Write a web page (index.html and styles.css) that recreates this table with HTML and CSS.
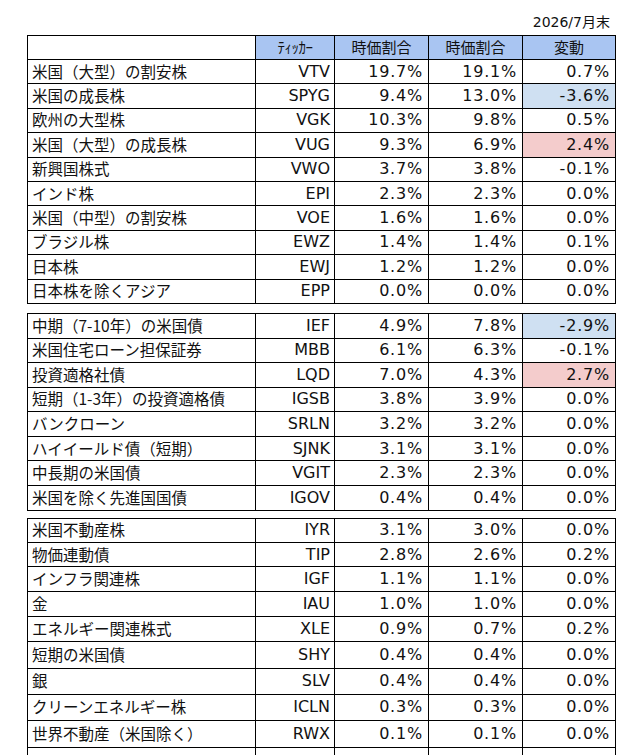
FILE: index.html
```html
<!DOCTYPE html>
<html lang="ja">
<head>
<meta charset="utf-8">
<title>2026/7月末</title>
<link rel="stylesheet" href="styles.css">
</head>
<body>
<div class="sheet">
  <div class="date">2026/7月末</div>

  <div class="block sec1">
    <div class="row head">
      <div class="cell blank"></div>
      <div class="cell hc tick-h">ﾃｨｯｶｰ</div>
      <div class="cell hc">時価割合</div>
      <div class="cell hc">時価割合</div>
      <div class="cell hc">変動</div>
    </div>
    <div class="row"><div class="cell name">米国（大型）の割安株</div><div class="cell tick">VTV</div><div class="cell num">19.7%</div><div class="cell num">19.1%</div><div class="cell num">0.7%</div></div>
    <div class="row"><div class="cell name">米国の成長株</div><div class="cell tick">SPYG</div><div class="cell num">9.4%</div><div class="cell num">13.0%</div><div class="cell num down">-3.6%</div></div>
    <div class="row"><div class="cell name">欧州の大型株</div><div class="cell tick">VGK</div><div class="cell num">10.3%</div><div class="cell num">9.8%</div><div class="cell num">0.5%</div></div>
    <div class="row"><div class="cell name">米国（大型）の成長株</div><div class="cell tick">VUG</div><div class="cell num">9.3%</div><div class="cell num">6.9%</div><div class="cell num up">2.4%</div></div>
    <div class="row"><div class="cell name">新興国株式</div><div class="cell tick">VWO</div><div class="cell num">3.7%</div><div class="cell num">3.8%</div><div class="cell num">-0.1%</div></div>
    <div class="row"><div class="cell name">インド株</div><div class="cell tick">EPI</div><div class="cell num">2.3%</div><div class="cell num">2.3%</div><div class="cell num">0.0%</div></div>
    <div class="row"><div class="cell name">米国（中型）の割安株</div><div class="cell tick">VOE</div><div class="cell num">1.6%</div><div class="cell num">1.6%</div><div class="cell num">0.0%</div></div>
    <div class="row"><div class="cell name">ブラジル株</div><div class="cell tick">EWZ</div><div class="cell num">1.4%</div><div class="cell num">1.4%</div><div class="cell num">0.1%</div></div>
    <div class="row"><div class="cell name">日本株</div><div class="cell tick">EWJ</div><div class="cell num">1.2%</div><div class="cell num">1.2%</div><div class="cell num">0.0%</div></div>
    <div class="row"><div class="cell name">日本株を除くアジア</div><div class="cell tick">EPP</div><div class="cell num">0.0%</div><div class="cell num">0.0%</div><div class="cell num">0.0%</div></div>
  </div>

  <div class="block sec2">
    <div class="row"><div class="cell name">中期（7-10年）の米国債</div><div class="cell tick">IEF</div><div class="cell num">4.9%</div><div class="cell num">7.8%</div><div class="cell num down">-2.9%</div></div>
    <div class="row"><div class="cell name">米国住宅ローン担保証券</div><div class="cell tick">MBB</div><div class="cell num">6.1%</div><div class="cell num">6.3%</div><div class="cell num">-0.1%</div></div>
    <div class="row"><div class="cell name">投資適格社債</div><div class="cell tick">LQD</div><div class="cell num">7.0%</div><div class="cell num">4.3%</div><div class="cell num up">2.7%</div></div>
    <div class="row"><div class="cell name">短期（1-3年）の投資適格債</div><div class="cell tick">IGSB</div><div class="cell num">3.8%</div><div class="cell num">3.9%</div><div class="cell num">0.0%</div></div>
    <div class="row"><div class="cell name">バンクローン</div><div class="cell tick">SRLN</div><div class="cell num">3.2%</div><div class="cell num">3.2%</div><div class="cell num">0.0%</div></div>
    <div class="row"><div class="cell name">ハイイールド債（短期）</div><div class="cell tick">SJNK</div><div class="cell num">3.1%</div><div class="cell num">3.1%</div><div class="cell num">0.0%</div></div>
    <div class="row"><div class="cell name">中長期の米国債</div><div class="cell tick">VGIT</div><div class="cell num">2.3%</div><div class="cell num">2.3%</div><div class="cell num">0.0%</div></div>
    <div class="row"><div class="cell name">米国を除く先進国国債</div><div class="cell tick">IGOV</div><div class="cell num">0.4%</div><div class="cell num">0.4%</div><div class="cell num">0.0%</div></div>
  </div>

  <div class="block sec3">
    <div class="row h24"><div class="cell name">米国不動産株</div><div class="cell tick">IYR</div><div class="cell num">3.1%</div><div class="cell num">3.0%</div><div class="cell num">0.0%</div></div>
    <div class="row h247"><div class="cell name">物価連動債</div><div class="cell tick">TIP</div><div class="cell num">2.8%</div><div class="cell num">2.6%</div><div class="cell num">0.2%</div></div>
    <div class="row h247"><div class="cell name">インフラ関連株</div><div class="cell tick">IGF</div><div class="cell num">1.1%</div><div class="cell num">1.1%</div><div class="cell num">0.0%</div></div>
    <div class="row h246"><div class="cell name">金</div><div class="cell tick">IAU</div><div class="cell num">1.0%</div><div class="cell num">1.0%</div><div class="cell num">0.0%</div></div>
    <div class="row h254"><div class="cell name">エネルギー関連株式</div><div class="cell tick">XLE</div><div class="cell num">0.9%</div><div class="cell num">0.7%</div><div class="cell num">0.2%</div></div>
    <div class="row h266"><div class="cell name">短期の米国債</div><div class="cell tick">SHY</div><div class="cell num">0.4%</div><div class="cell num">0.4%</div><div class="cell num">0.0%</div></div>
    <div class="row h26"><div class="cell name">銀</div><div class="cell tick">SLV</div><div class="cell num">0.4%</div><div class="cell num">0.4%</div><div class="cell num">0.0%</div></div>
    <div class="row h26"><div class="cell name">クリーンエネルギー株</div><div class="cell tick">ICLN</div><div class="cell num">0.3%</div><div class="cell num">0.3%</div><div class="cell num">0.0%</div></div>
    <div class="row h274"><div class="cell name">世界不動産（米国除く）</div><div class="cell tick">RWX</div><div class="cell num">0.1%</div><div class="cell num">0.1%</div><div class="cell num">0.0%</div></div>
    <div class="row h26"><div class="cell name"></div><div class="cell tick"></div><div class="cell num"></div><div class="cell num"></div><div class="cell num"></div></div>
  </div>
</div>
</body>
</html>
```

FILE: styles.css
```css
html, body {
  margin: 0;
  padding: 0;
  background: #ffffff;
}

body {
  font-family: "DejaVu Sans", "Noto Sans CJK JP", sans-serif;
  color: #111111;
  overflow: hidden;
}

.sheet {
  margin-left: 27px;
  width: 589px;
}

.date {
  box-sizing: border-box;
  height: 35px;
  padding-top: 12px;
  padding-right: 6px;
  line-height: 20px;
  text-align: right;
  font-size: 14px;
}

.block {
  border-top: 1px solid #000000;
  border-left: 1px solid #000000;
  width: 588px;
}

.sec2 { margin-top: 9px; }
.sec3 { margin-top: 7px; }

.row {
  display: grid;
  grid-template-columns: 228px 79px 94px 94px 93px;
  height: 24.4px;
}

.sec2 .row { height: 24.6px; }

.sec3 .row.h24 { height: 24px; }
.sec3 .row.h246 { height: 24.6px; }
.sec3 .row.h247 { height: 24.7px; }
.sec3 .row.h254 { height: 25.4px; }
.sec3 .row.h26 { height: 26px; }
.sec3 .row.h266 { height: 26.6px; }
.sec3 .row.h274 { height: 27.4px; }

.row.head { height: 24px; }

.cell {
  box-sizing: border-box;
  border-right: 1px solid #000000;
  border-bottom: 1px solid #000000;
  display: flex;
  align-items: center;
  white-space: nowrap;
  overflow: hidden;
  line-height: 16px;
}

.hc {
  justify-content: center;
  background: #a9c5f2;
  font-family: "Noto Sans CJK JP", sans-serif;
  font-size: 15px;
  padding-bottom: 1px;
}

.tick-h {
  letter-spacing: -0.5px;
}

.name {
  padding-left: 4px;
  padding-bottom: 2px;
  font-family: "Noto Sans CJK JP", sans-serif;
  font-size: 15.5px;
}

.tick {
  justify-content: flex-end;
  padding-right: 4px;
  font-size: 16px;
}

.num {
  justify-content: flex-end;
  padding-right: 5px;
  font-size: 16px;
  letter-spacing: 0.8px;
}

.down { background: #cfe0f2; }
.up { background: #f4cccc; }
```
